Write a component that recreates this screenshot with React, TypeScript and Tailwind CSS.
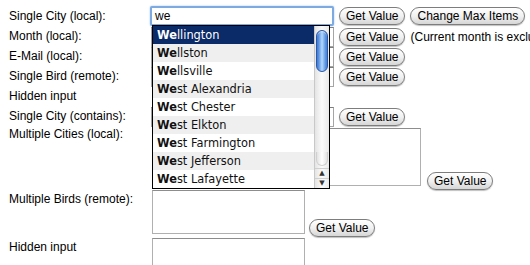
import React from "react";

const cities = [
  "Wellington",
  "Wellston",
  "Wellsville",
  "West Alexandria",
  "West Chester",
  "West Elkton",
  "West Farmington",
  "West Jefferson",
  "West Lafayette",
];

function AquaButton({ children }: { children: React.ReactNode }) {
  return (
    <button className="h-[18px] shrink-0 whitespace-nowrap rounded-full border border-[#7d7d7d] bg-gradient-to-b from-white via-[#f1f1f1] to-[#d6d6d6] px-[6px] text-[12px] leading-[16px] text-black shadow-[0_1px_1px_rgba(0,0,0,0.25)]">
      {children}
    </button>
  );
}

function TextInput() {
  return (
    <div className="h-[20px] w-[183px] shrink-0 border border-[#a5a5a5] border-t-[#7c7c7c] bg-white" />
  );
}

function Scrollbar() {
  return (
    <div className="flex w-[15px] flex-col border-l border-[#c8c8c8] bg-gradient-to-r from-[#e4e4e4] via-[#fbfbfb] to-[#e9e9e9]">
      <div className="relative flex-1">
        <div className="absolute left-[1px] right-[1px] top-[4px] h-[42px] rounded-full border border-[#2a58ad] bg-gradient-to-r from-[#2f6fd0] via-[#b4d8fb] to-[#3577d4] shadow-[inset_0_1px_1px_rgba(255,255,255,0.6)]" />
        <div className="absolute bottom-[2px] left-[1px] right-[1px] h-[14px] rounded-b-full border border-t-0 border-[#d0d0d0] bg-gradient-to-r from-[#e2e2e2] via-white to-[#e2e2e2]" />
      </div>
      <div className="flex h-[10px] items-center justify-center border-t border-[#cfcfcf] text-[7px] leading-none text-[#333]">
        ▲
      </div>
      <div className="flex h-[10px] items-center justify-center border-t border-[#cfcfcf] text-[7px] leading-none text-[#333]">
        ▼
      </div>
    </div>
  );
}

function Dropdown() {
  return (
    <div className="absolute left-[1px] top-[19px] z-10 flex w-[178px] border border-black bg-white font-['DejaVu_Sans',sans-serif] text-[11.4px]">
      <ul className="flex-1">
        {cities.map((c, i) => (
          <li
            key={c}
            className={
              i === 0
                ? "h-[18px] bg-[#0b2a68] pl-[4px] leading-[18px] text-white"
                : i % 2 === 1
                ? "h-[18px] bg-[#efefef] pl-[4px] leading-[18px] text-[#111]"
                : "h-[18px] bg-white pl-[4px] leading-[18px] text-[#111]"
            }
          >
            <b>{c.slice(0, 2)}</b>
            {c.slice(2)}
          </li>
        ))}
      </ul>
      <Scrollbar />
    </div>
  );
}

function Label({ children, top }: { children: React.ReactNode; top?: boolean }) {
  return (
    <div
      className={
        top
          ? "w-[142px] shrink-0 self-start leading-[16px]"
          : "w-[142px] shrink-0 leading-[16px]"
      }
    >
      {children}
    </div>
  );
}

export default function App() {
  return (
    <div className="h-[265px] w-[530px] overflow-hidden bg-white pl-[9px] pt-[6px] font-['Liberation_Sans',Arial,sans-serif] text-[12px] text-black">
      {/* Single City (local) */}
      <div className="flex h-[20px] items-center">
        <Label>Single City (local):</Label>
        <div className="relative flex items-center gap-[5px]">
          <div className="relative h-[20px] w-[184px] shrink-0 -ml-[1px] rounded-[2px] border-2 border-[#7eaae2] bg-white pl-[3px] text-[12px] leading-[16px] shadow-[0_0_2px_#9cc2f0]">
            we
          </div>
          <Dropdown />
          <AquaButton>Get Value</AquaButton>
          <AquaButton>Change Max Items</AquaButton>
        </div>
      </div>

      {/* Month */}
      <div className="flex h-[20px] items-center">
        <Label>Month (local):</Label>
        <div className="flex min-w-0 items-center gap-[5px] pt-[2px]">
          <TextInput />
          <AquaButton>Get Value</AquaButton>
          <span className="overflow-hidden whitespace-nowrap">(Current month is excluded from list)</span>
        </div>
      </div>

      {/* E-Mail */}
      <div className="flex h-[20px] items-center">
        <Label>E-Mail (local):</Label>
        <div className="flex items-center gap-[5px] pt-[2px]">
          <TextInput />
          <AquaButton>Get Value</AquaButton>
        </div>
      </div>

      {/* Single Bird */}
      <div className="flex h-[20px] items-center">
        <Label>Single Bird (remote):</Label>
        <div className="flex items-center gap-[5px] pt-[2px]">
          <TextInput />
          <AquaButton>Get Value</AquaButton>
        </div>
      </div>

      <div className="flex h-[20px] items-center">
        <Label>Hidden input</Label>
      </div>

      {/* Single City (contains) */}
      <div className="flex h-[20px] items-center">
        <Label>Single City (contains):</Label>
        <div className="flex items-center gap-[5px] pt-[2px]">
          <TextInput />
          <AquaButton>Get Value</AquaButton>
        </div>
      </div>

      {/* Multiple Cities */}
      <div className="flex items-end">
        <Label top>Multiple Cities (local):</Label>
        <div className="flex items-end gap-[6px] pt-[2px]">
          <div className="mb-[4px] ml-[1px] h-[58px] w-[269px] border border-[#b0b0b0] border-t-[#8d8d8d] bg-white" />
          <AquaButton>Get Value</AquaButton>
        </div>
      </div>

      {/* Multiple Birds */}
      <div className="flex items-end">
        <Label top>
          <div className="pt-[1px]">Multiple Birds (remote):</div>
        </Label>
        <div className="flex items-end gap-[4px]">
          <div className="mb-[4px] ml-[1px] h-[44px] w-[153px] border border-[#b0b0b0] border-t-[#8d8d8d] bg-white" />
          <div className="mb-[1px]">
            <AquaButton>Get Value</AquaButton>
          </div>
        </div>
      </div>

      {/* Hidden input */}
      <div className="flex items-start">
        <Label top>
          <div className="pt-[1px]">Hidden input</div>
        </Label>
        <div className="ml-[1px] h-[44px] w-[153px] border border-[#b0b0b0] border-t-[#8d8d8d] bg-white" />
      </div>
    </div>
  );
}
